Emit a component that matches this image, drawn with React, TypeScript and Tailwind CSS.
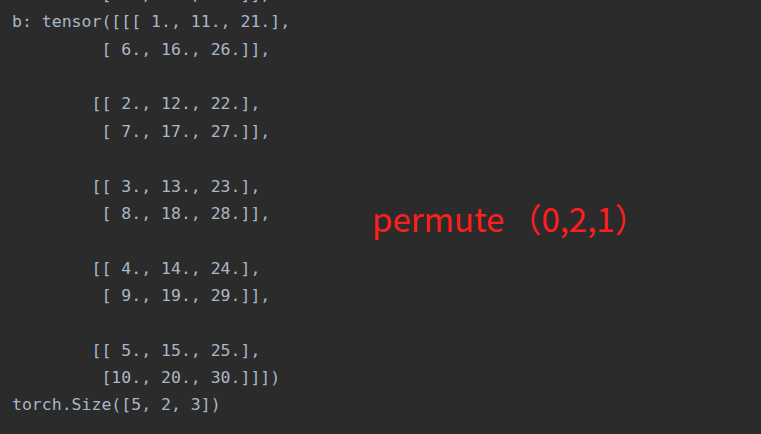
import React from 'react';

const lines = [
  '         [ 5., 10., 15.]],',
  'b: tensor([[[ 1., 11., 21.],',
  '         [ 6., 16., 26.]],',
  '',
  '        [[ 2., 12., 22.],',
  '         [ 7., 17., 27.]],',
  '',
  '        [[ 3., 13., 23.],',
  '         [ 8., 18., 28.]],',
  '',
  '        [[ 4., 14., 24.],',
  '         [ 9., 19., 29.]],',
  '',
  '        [[ 5., 15., 25.],',
  '         [10., 20., 30.]]])',
  'torch.Size([5, 2, 3])',
];

export default function App() {
  return (
    <div className="w-[761px] h-[434px] overflow-hidden bg-[#2b2b2b] flex">
      <pre className="mt-[-19px] pl-[12px] w-[372px] shrink-0 text-[16.5px] leading-[27.36px] text-[#a9b7c6] font-['DejaVu_Sans_Mono',monospace]">
        {lines.map((l, i) => (
          <div key={i} className="h-[27.36px] whitespace-pre">
            {l}
          </div>
        ))}
      </pre>
      <div className="mt-[195px] h-[46px] leading-[46px] text-[33px] text-[#ff1e1e] whitespace-pre font-['Noto_Sans_CJK_SC',sans-serif]">
        permute<span className="ml-[4px]">（0,2,1）</span>
      </div>
    </div>
  );
}
